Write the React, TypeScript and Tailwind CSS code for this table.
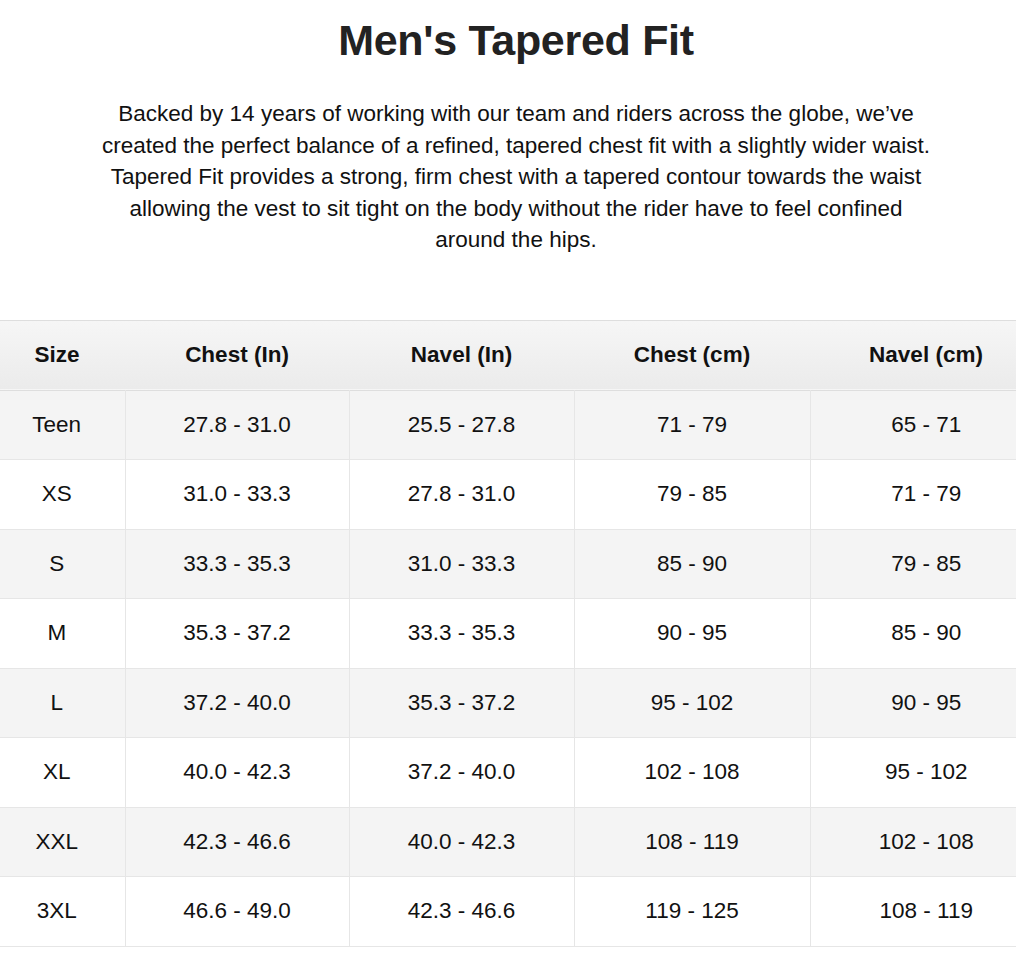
const rows = [
  ["Teen", "27.8 - 31.0", "25.5 - 27.8", "71 - 79", "65 - 71"],
  ["XS", "31.0 - 33.3", "27.8 - 31.0", "79 - 85", "71 - 79"],
  ["S", "33.3 - 35.3", "31.0 - 33.3", "85 - 90", "79 - 85"],
  ["M", "35.3 - 37.2", "33.3 - 35.3", "90 - 95", "85 - 90"],
  ["L", "37.2 - 40.0", "35.3 - 37.2", "95 - 102", "90 - 95"],
  ["XL", "40.0 - 42.3", "37.2 - 40.0", "102 - 108", "95 - 102"],
  ["XXL", "42.3 - 46.6", "40.0 - 42.3", "108 - 119", "102 - 108"],
  ["3XL", "46.6 - 49.0", "42.3 - 46.6", "119 - 125", "108 - 119"],
];

const headers = ["Size", "Chest (In)", "Navel (In)", "Chest (cm)", "Navel (cm)"];
const cols = ["w-[125px] pr-[11px]", "w-[224px]", "w-[225px]", "w-[236px]", "w-[206px] pl-[26px]"];

export default function App() {
  return (
    <div className="min-h-screen bg-white font-['Liberation_Sans',Arial,sans-serif] text-[#111]">
      <div className="pl-[16px]">
        <h1 className="pt-[16px] text-center text-[43px] font-bold leading-[48px] tracking-[-0.3px] text-[#222]">
          Men's Tapered Fit
        </h1>
        <p className="mx-auto mt-[34px] w-[840px] text-center text-[22.5px] leading-[31.5px]">
          Backed by 14 years of working with our team and riders across the globe, we’ve created the perfect balance of a
          refined, tapered chest fit with a slightly wider waist. Tapered Fit provides a strong, firm chest with a tapered
          contour towards the waist allowing the vest to sit tight on the body without the rider have to feel confined
          around the hips.
        </p>
      </div>
      <table className="mt-[64px] w-full table-fixed border-collapse text-center text-[22.5px]">
        <thead>
          <tr className="h-[70px] border-t border-b border-[#dedede] bg-gradient-to-b from-[#f6f6f6] to-[#ebebeb]">
            {headers.map((h, i) => (
              <th key={h} className={`${cols[i]} font-bold`}>
                {h}
              </th>
            ))}
          </tr>
        </thead>
        <tbody>
          {rows.map((row, r) => (
            <tr key={row[0]} className={`h-[69.5px] border-b border-[#e6e6e6] ${r % 2 === 0 ? "bg-[#f4f4f4]" : "bg-white"}`}>
              {row.map((cell, i) => (
                <td key={i} className={`${cols[i]} ${i > 0 ? "border-l border-[#e6e6e6]" : ""}`}>
                  {cell}
                </td>
              ))}
            </tr>
          ))}
        </tbody>
      </table>
    </div>
  );
}
